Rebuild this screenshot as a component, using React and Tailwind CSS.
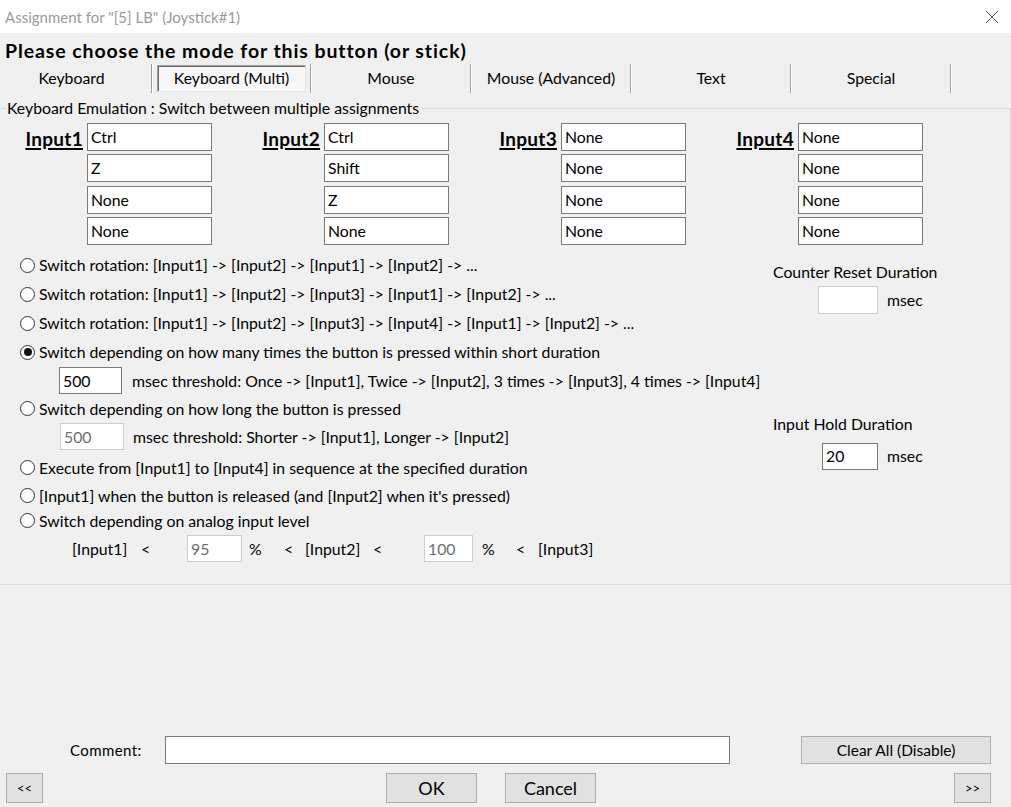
import React from "react";

const font = { fontFamily: "Lato, 'Noto Sans', sans-serif" };

function Box({ value = "", className = "", disabled = false }) {
  return (
    <div
      className={
        "bg-white border flex items-center pl-[3px] text-[15.8px] " +
        (disabled ? "border-[#cccccc] text-[#6d6d6d] " : "border-[#7a7a7a] text-black ") +
        className
      }
    >
      {value}
    </div>
  );
}

function Radio({ checked = false }) {
  return (
    <div className="w-[15px] h-[15px] rounded-full border border-[#333333] bg-white flex items-center justify-center shrink-0">
      {checked && <div className="w-[8px] h-[8px] rounded-full bg-[#111111]" />}
    </div>
  );
}

function RadioRow({ h, checked, children }) {
  return (
    <div className={"flex items-center gap-[4px] pl-[20px] " + h}>
      <Radio checked={checked} />
      <span>{children}</span>
    </div>
  );
}

function InputCol({ label, values }) {
  return (
    <div className="flex w-[237px]">
      <div className="w-[83px] flex justify-end pt-[5px]">
        <span className="font-bold text-[19px] leading-[22px] tracking-[0.3px] underline underline-offset-[2px] decoration-[1.5px]">
          {label}
        </span>
      </div>
      <div className="ml-[4px] flex flex-col gap-[3.3px]">
        {values.map((v, i) => (
          <Box key={i} value={v} className="w-[125px] h-[28px]" />
        ))}
      </div>
    </div>
  );
}

function Tab({ children, w, selected, first }) {
  return (
    <div className={"flex items-center h-full " + w}>
      <div className="flex-1 flex items-center justify-center h-full">
        {selected ? (
          <div className="w-full mx-[4px] h-[27px] flex items-center justify-center bg-[#f7f7f7] border-t border-l border-[#a0a0a0] border-r border-b border-r-[#e6e6e6] border-b-[#e6e6e6] shadow-[inset_1px_1px_0_#696969]">
            {children}
          </div>
        ) : (
          <span className={first ? "pr-[8px]" : ""}>{children}</span>
        )}
      </div>
      <div className="w-[2px] h-[29px] border-l border-[#a0a0a0] border-r border-r-white" />
    </div>
  );
}

export default function App() {
  return (
    <div
      className="w-[1011px] h-[807px] bg-[#f0f0f0] text-black text-[15.8px] leading-[20px] flex flex-col overflow-hidden"
      style={font}
    >
      {/* Title bar */}
      <div className="h-[33px] bg-white flex items-center justify-between shrink-0">
        <span className="pl-[5px] text-[#9a9a9a] text-[15px]">Assignment for "[5] LB" (Joystick#1)</span>
        <svg width="14" height="14" viewBox="0 0 14 14" className="mr-[12px]">
          <path d="M1 1 L13 13 M13 1 L1 13" stroke="#555" strokeWidth="1" />
        </svg>
      </div>

      {/* Heading */}
      <div className="h-[29px] flex items-end pl-[5px] shrink-0">
        <span className="font-bold text-[19.5px] leading-[22px] tracking-[0.9px]">Please choose the mode for this button (or stick)</span>
      </div>

      {/* Tabs */}
      <div className="h-[32px] flex items-center shrink-0">
        <Tab w="w-[153px]" first>Keyboard</Tab>
        <Tab w="w-[159px]" selected>Keyboard (Multi)</Tab>
        <Tab w="w-[160px]">Mouse</Tab>
        <Tab w="w-[160px]">Mouse (Advanced)</Tab>
        <Tab w="w-[160px]">Text</Tab>
        <Tab w="w-[160px]">Special</Tab>
      </div>

      {/* Group box */}
      <fieldset className="mt-[4px] border-t border-r border-b border-[#d9d9d9] pb-[21px] shrink-0">
        <legend className="ml-[6px] pr-[3px] pl-[1px]">Keyboard Emulation : Switch between multiple assignments</legend>

        <div className="flex pt-[5px]">
          <InputCol label="Input1" values={["Ctrl", "Z", "None", "None"]} />
          <InputCol label="Input2" values={["Ctrl", "Shift", "Z", "None"]} />
          <InputCol label="Input3" values={["None", "None", "None", "None"]} />
          <InputCol label="Input4" values={["None", "None", "None", "None"]} />
        </div>

        <div className="flex mt-[6px]">
          <div className="w-[773px] flex flex-col">
            <RadioRow h="h-[29px]">Switch rotation: [Input1] -&gt; [Input2] -&gt; [Input1] -&gt; [Input2] -&gt; ...</RadioRow>
            <RadioRow h="h-[29px]">Switch rotation: [Input1] -&gt; [Input2] -&gt; [Input3] -&gt; [Input1] -&gt; [Input2] -&gt; ...</RadioRow>
            <RadioRow h="h-[29px]">Switch rotation: [Input1] -&gt; [Input2] -&gt; [Input3] -&gt; [Input4] -&gt; [Input1] -&gt; [Input2] -&gt; ...</RadioRow>
            <RadioRow h="h-[29px]" checked>Switch depending on how many times the button is pressed within short duration</RadioRow>
            <div className="h-[28px] flex items-center pl-[59px]">
              <Box value="500" className="w-[63px] h-[27px]" />
              <span className="ml-[10px]">msec threshold: Once -&gt; [Input1], Twice -&gt; [Input2], 3 times -&gt; [Input3], 4 times -&gt; [Input4]</span>
            </div>
            <RadioRow h="h-[28px]">Switch depending on how long the button is pressed</RadioRow>
            <div className="h-[28px] flex items-center pl-[60px]">
              <Box value="500" disabled className="w-[64px] h-[27px]" />
              <span className="ml-[9px]">msec threshold: Shorter -&gt; [Input1], Longer -&gt; [Input2]</span>
            </div>
            <RadioRow h="h-[34px]">Execute from [Input1] to [Input4] in sequence at the specified duration</RadioRow>
            <RadioRow h="h-[22px]">[Input1] when the button is released (and [Input2] when it's pressed)</RadioRow>
            <RadioRow h="h-[28px]">Switch depending on analog input level</RadioRow>
            <div className="h-[28px] flex items-center pl-[72px]">
              <span className="w-[69px]">[Input1]</span>
              <span className="w-[46px]">&lt;</span>
              <Box value="95" disabled className="w-[55px] h-[27px]" />
              <span className="ml-[7px] w-[35px]">%</span>
              <span className="w-[21px]">&lt;</span>
              <span className="w-[68px]">[Input2]</span>
              <span className="w-[51px]">&lt;</span>
              <Box value="100" disabled className="w-[49px] h-[27px]" />
              <span className="ml-[9px] w-[34px]">%</span>
              <span className="w-[22px]">&lt;</span>
              <span>[Input3]</span>
            </div>
          </div>

          <div className="flex flex-col pt-[11px]">
            <span>Counter Reset Duration</span>
            <div className="flex items-center mt-[4px]">
              <Box value="" disabled className="ml-[45px] w-[60px] h-[28px]" />
              <span className="ml-[9px]">msec</span>
            </div>
            <span className="mt-[100px]">Input Hold Duration</span>
            <div className="flex items-center mt-[9px]">
              <Box value="20" className="ml-[49px] w-[56px] h-[27px]" />
              <span className="ml-[9px]">msec</span>
            </div>
          </div>
        </div>
      </fieldset>

      <div className="flex-1" />

      {/* Comment row */}
      <div className="h-[28px] flex items-center shrink-0">
        <span className="w-[165px] pl-[70px] text-[15px] tracking-[0.4px]">Comment:</span>
        <div className="w-[565px] h-[28px] bg-white border border-[#7a7a7a]" />
        <button className="ml-[71px] w-[190px] h-[28px] bg-[#e1e1e1] border border-[#adadad] text-[15.5px]">
          Clear All (Disable)
        </button>
      </div>

      {/* Buttons row */}
      <div className="mt-[9px] mb-[3px] h-[31px] flex items-start shrink-0">
        <button className="ml-[6px] w-[37px] h-[30px] bg-[#e1e1e1] border border-[#adadad] text-[13px]">&lt;&lt;</button>
        <button className="ml-[343px] w-[91px] h-[30px] bg-[#e1e1e1] border border-[#adadad] text-[18px]">OK</button>
        <button className="ml-[28px] w-[91px] h-[30px] bg-[#e1e1e1] border border-[#adadad] text-[18px]">Cancel</button>
        <button className="ml-[358px] w-[37px] h-[30px] bg-[#e1e1e1] border border-[#adadad] text-[13px]">&gt;&gt;</button>
      </div>
    </div>
  );
}
